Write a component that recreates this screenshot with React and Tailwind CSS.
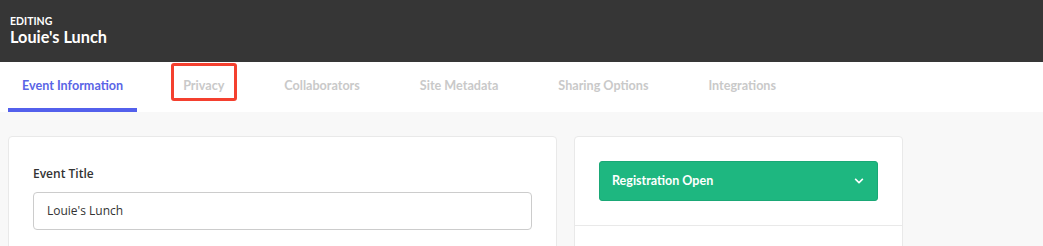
import React from "react";
import { FaChevronDown } from "react-icons/fa";

const tabs = [
  "Event Information",
  "Privacy",
  "Collaborators",
  "Site Metadata",
  "Sharing Options",
  "Integrations",
];

export default function App() {
  return (
    <div className="w-full min-h-screen bg-[#f8f8f8] font-['Lato',sans-serif]">
      <header className="h-[62px] bg-[#363636] px-[10px] pt-[15px] text-white">
        <div className="text-[10.5px] leading-[12px] font-bold uppercase">
          Editing
        </div>
        <div className="text-[16.3px] leading-[19px] font-bold">Louie's Lunch</div>
      </header>

      <nav className="flex h-[50px] gap-[32px] bg-white px-[8px]">
        {tabs.map((t, i) => (
          <div
            key={t}
            className={
              i === 0
                ? "relative flex h-[50px] items-center border-b-4 border-[#5360ec] px-[14px] text-[12.6px] font-bold text-[#5a65e6]"
                : "relative flex h-[50px] items-center border-b-4 border-transparent px-[14px] text-[12.6px] font-bold text-[#c9c9c9]"
            }
          >
            <span className="leading-[15px]">{t}</span>
            {t === "Privacy" && (
              <span className="pointer-events-none absolute left-[2px] right-[1px] top-[1px] bottom-[7px] rounded-[3px] border-[3px] border-[#f4402f]" />
            )}
          </div>
        ))}
      </nav>

      <main className="flex items-start gap-[17px] px-[8px] pt-[24px]">
        <section className="min-h-[200px] w-[549px] rounded-[4px] border border-[#e9e9e9] bg-white px-[24px] pt-[28px]">
          <label className="block text-[12px] leading-[18px] font-semibold text-[#333333] font-['Open_Sans',sans-serif]">
            Event Title
          </label>
          <div className="mt-[9px] flex h-[38px] w-[499px] items-center rounded-[4px] border border-[#cccccc] pl-[13px] text-[12px] text-[#333333] font-['Open_Sans',sans-serif]">
            Louie's Lunch
          </div>
        </section>

        <section className="min-h-[200px] w-[329px] rounded-[4px] border border-[#e9e9e9] bg-white">
          <div className="border-b border-[#e9e9e9] p-[24px]">
            <div className="flex h-[40px] items-center justify-between rounded-[3px] border border-[#1aa876] bg-[#1eb780] pl-[12px] pr-[13px] text-white">
              <span className="text-[12.5px] font-bold leading-[16px]">Registration Open</span>
              <FaChevronDown className="h-[10px] w-[10px]" />
            </div>
          </div>
        </section>
      </main>
    </div>
  );
}
